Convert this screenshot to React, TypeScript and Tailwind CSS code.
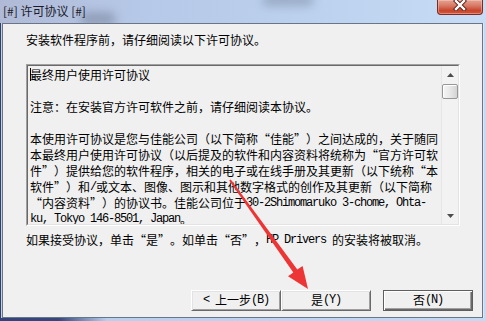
import React from "react";

function Rich({ text }: { text: string }) {
  const tokens = text.split(/(“|”|[\x20-\x7e]+)/).filter((t) => t !== "");
  return (
    <>
      {tokens.map((t, i) => {
        if (t === "“")
          return (
            <span key={i} className="inline-block w-[12px] text-right">
              “
            </span>
          );
        if (t === "”")
          return (
            <span key={i} className="inline-block w-[12px] text-left">
              ”
            </span>
          );
        if (/^[\x20-\x7e]+$/.test(t))
          return (
            <span
              key={i}
              className="relative -top-[2px] font-['Liberation_Mono',monospace] text-[12px] tracking-[-1.2px] whitespace-pre"
            >
              {t}
            </span>
          );
        return <span key={i}>{t}</span>;
      })}
    </>
  );
}

const lines = [
  "最终用户使用许可协议",
  "",
  "注意：在安装官方许可软件之前，请仔细阅读本协议。",
  "",
  "本使用许可协议是您与佳能公司（以下简称“佳能”）之间达成的，关于随同",
  "本最终用户使用许可协议（以后提及的软件和内容资料将统称为“官方许可软",
  "件”）提供给您的软件程序，相关的电子或在线手册及其更新（以下统称“本",
  "软件”）和/或文本、图像、图示和其他数字格式的创作及其更新（以下简称",
  "“内容资料”）的协议书。佳能公司位于30-2Shimomaruko 3-chome, Ohta-",
  "ku, Tokyo 146-8501, Japan。",
];

function Btn({ label, def }: { label: string; def?: boolean }) {
  return (
    <div
      className={
        def
          ? "w-[90px] h-[21px] flex items-center justify-center bg-[#f0f0f0] border border-[#5e5e5e] shadow-[inset_1px_1px_0_#ffffff,inset_-1px_-1px_0_#696969,inset_-2px_-2px_0_#a0a0a0]"
          : "w-[90px] h-[21px] flex items-center justify-center bg-[#f0f0f0] border border-t-white border-l-white border-r-[#696969] border-b-[#696969] shadow-[inset_1px_1px_0_#e3e3e3,inset_-1px_-1px_0_#a0a0a0]"
      }
    >
      <span className="whitespace-nowrap">
        <Rich text={label} />
      </span>
    </div>
  );
}

export default function App() {
  return (
    <div className="relative w-[486px] h-[321px] overflow-hidden flex flex-col bg-[linear-gradient(to_right,#b0bad6_0%,#b6c9e8_30%,#bdd3ef_70%,#c8dcf5_100%)] font-['Noto_Sans_CJK_SC','Noto_Sans',sans-serif] text-[12px] leading-[16px] text-black">
      {/* blurred desktop bleed-through */}
      <div className="absolute left-[80px] top-[12px] w-[36px] h-[14px] rounded-full bg-[#6f7b92] opacity-50 blur-[5px]" />
      <div className="absolute left-[262px] top-[-6px] w-[52px] h-[12px] rounded-full bg-[#7886a0] opacity-50 blur-[5px]" />

      {/* title bar */}
      <div className="relative h-[23px] shrink-0 flex items-start">
        <div className="pl-[3px] pt-[3px] whitespace-nowrap text-[#1b1b2b]">[#] 许可协议 [#]</div>
        <div className="ml-auto mr-[3px] w-[46px] h-[15px] rounded-b-[4px] border border-t-0 border-[#7c2b22] bg-[linear-gradient(to_bottom,#e6a393_0%,#d77a66_40%,#c8452c_75%,#d4553a_100%)] shadow-[inset_0_0_0_1px_rgba(255,220,210,0.4)] flex justify-center">
          <svg width="14" height="11" viewBox="0 0 14 11">
            <path d="M3 1 L11 9 M11 1 L3 9" stroke="#5b201a" strokeWidth="4.2" strokeLinecap="square" />
            <path d="M3 1 L11 9 M11 1 L3 9" stroke="#ffffff" strokeWidth="2.4" strokeLinecap="square" />
          </svg>
        </div>
      </div>

      {/* body row */}
      <div className="relative flex flex-1 min-h-0">
        <div className="w-[2px] shrink-0 bg-[#c2cfe4] border-l border-[#2e3f69]" />
        <div className="flex-1 min-w-0 border border-[#6a7588] bg-[#f0f0f0] flex flex-col">
          <div className="pl-[23px] pt-[8px] whitespace-nowrap">
            <Rich text="安装软件程序前，请仔细阅读以下许可协议。" />
          </div>

          <div className="ml-[23px] mt-[16px] w-[434px] h-[162px] border border-t-[#a0a0a0] border-l-[#a0a0a0] border-b-white border-r-white">
            <div className="w-full h-full border border-t-[#696969] border-l-[#696969] border-b-[#e3e3e3] border-r-[#e3e3e3] flex">
              <div className="relative flex-1 min-w-0 overflow-hidden pl-[2px] pt-[1px]">
                {lines.map((l, i) => (
                  <div key={i} className="h-[16px] whitespace-nowrap">
                    <Rich text={l} />
                  </div>
                ))}
                <div className="absolute left-[2px] top-[2px] w-[1px] h-[13px] bg-black" />
              </div>
              <div className="w-[17px] h-full shrink-0 flex flex-col bg-[#f2f2f2] border-l border-[#e6e6e6]">
                <div className="h-[17px] shrink-0 flex items-center justify-center">
                  <svg width="7" height="4" viewBox="0 0 7 4">
                    <polygon points="3.5,0 7,4 0,4" fill="#4c4c4c" />
                  </svg>
                </div>
                <div className="mt-[1px] h-[15px] shrink-0 rounded-[2px] border border-[#979797] bg-[linear-gradient(to_right,#f6f6f6,#e8e8e8_50%,#d4d4d4)] shadow-[inset_1px_1px_0_#ffffff]" />
                <div className="flex-1" />
                <div className="h-[17px] shrink-0 flex items-center justify-center">
                  <svg width="7" height="4" viewBox="0 0 7 4">
                    <polygon points="0,0 7,0 3.5,4" fill="#4c4c4c" />
                  </svg>
                </div>
              </div>
            </div>
          </div>

          <div className="pl-[23px] mt-[6px] whitespace-nowrap">
            <Rich text="如果接受协议，单击“是”。如单击“否”，HP Drivers 的安装将被取消。" />
          </div>

          <div className="mt-[40px] flex justify-end pr-[9px]">
            <Btn label="< 上一步(B)" />
            <Btn label="是(Y)" />
            <div className="w-[12px]" />
            <Btn label="否(N)" def />
          </div>
        </div>
        <div className="w-[3px] shrink-0 bg-[#c6daf2] border-l border-[#dbe8f8]" />
      </div>
      <div className="h-[3px] shrink-0 bg-[linear-gradient(to_right,#31437a_0%,#34477e_12%,#b8cfee_22%,#c4d9f3_100%)]" />

      {/* red annotation arrow */}
      <svg className="absolute left-0 top-0 pointer-events-none" width="486" height="321" viewBox="0 0 486 321">
        <polygon
          points="230.8,179.4 297.3,269.6 302.6,265.9 308,289 288,276.3 293.3,272.5 229.2,180.6"
          fill="#ee3535"
        />
      </svg>
    </div>
  );
}
